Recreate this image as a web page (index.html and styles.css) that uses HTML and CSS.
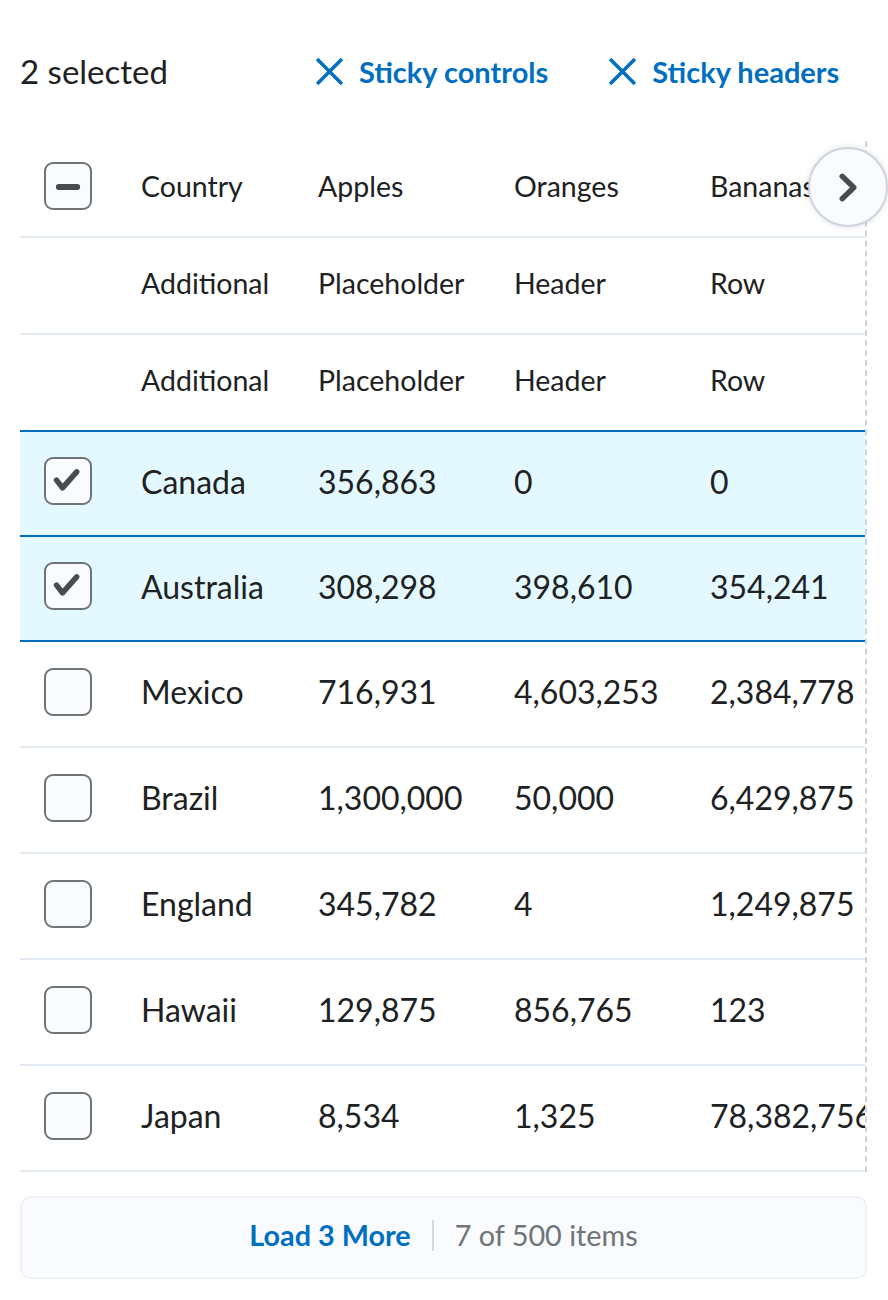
FILE: index.html
```html
<!DOCTYPE html>
<html lang="en">
<head>
<meta charset="utf-8">
<title>Table</title>
<link rel="stylesheet" href="styles.css">
</head>
<body>
<div class="page">
  <div class="toolbar">
    <span class="count">2 selected</span>
    <button class="action first">
      <svg class="x-icon" viewBox="0 0 28 28"><path d="M2 2 L26 26 M26 2 L2 26"/></svg>
      <span>Sticky controls</span>
    </button>
    <button class="action">
      <svg class="x-icon" viewBox="0 0 28 28"><path d="M2 2 L26 26 M26 2 L2 26"/></svg>
      <span>Sticky headers</span>
    </button>
  </div>

  <div class="table-area">
    <div class="table-wrap">
      <table class="data">
        <colgroup>
          <col class="c-check"><col class="c-country"><col class="c-num"><col class="c-num"><col class="c-wide">
        </colgroup>
        <thead>
          <tr class="head-main">
            <th class="check"><span class="box"><svg viewBox="0 0 48 48"><path class="minus" d="M14 25 L34 25"/></svg></span></th>
            <th>Country</th><th>Apples</th><th>Oranges</th><th>Bananas</th>
          </tr>
          <tr>
            <th></th><th>Additional</th><th>Placeholder</th><th>Header</th><th>Row</th>
          </tr>
          <tr>
            <th></th><th>Additional</th><th>Placeholder</th><th>Header</th><th>Row</th>
          </tr>
        </thead>
        <tbody>
          <tr class="selected">
            <td class="check"><span class="box"><svg viewBox="0 0 48 48"><path class="tick" d="M11.5 23 L18 31.5 L33.5 14"/></svg></span></td>
            <td>Canada</td><td>356,863</td><td>0</td><td>0</td>
          </tr>
          <tr class="selected">
            <td class="check"><span class="box"><svg viewBox="0 0 48 48"><path class="tick" d="M11.5 23 L18 31.5 L33.5 14"/></svg></span></td>
            <td>Australia</td><td>308,298</td><td>398,610</td><td>354,241</td>
          </tr>
          <tr>
            <td class="check"><span class="box"></span></td>
            <td>Mexico</td><td>716,931</td><td>4,603,253</td><td>2,384,778</td>
          </tr>
          <tr>
            <td class="check"><span class="box"></span></td>
            <td>Brazil</td><td>1,300,000</td><td>50,000</td><td>6,429,875</td>
          </tr>
          <tr>
            <td class="check"><span class="box"></span></td>
            <td>England</td><td>345,782</td><td>4</td><td>1,249,875</td>
          </tr>
          <tr>
            <td class="check"><span class="box"></span></td>
            <td>Hawaii</td><td>129,875</td><td>856,765</td><td>123</td>
          </tr>
          <tr>
            <td class="check"><span class="box"></span></td>
            <td>Japan</td><td>8,534</td><td>1,325</td><td>78,382,756</td>
          </tr>
        </tbody>
      </table>
    </div>
    <button class="scroll-btn" aria-label="Scroll right">
      <svg viewBox="0 0 78 78"><path d="M33 28 L45 39.5 L33 51"/></svg>
    </button>
  </div>

  <div class="load-more">
    <span class="load-link">Load 3 More</span>
    <span class="sep"></span>
    <span class="load-info">7 of 500 items</span>
  </div>
</div>
</body>
</html>
```

FILE: styles.css
```css
html, body {
  margin: 0;
  padding: 0;
  background: #ffffff;
}

body {
  font-family: Lato, "Open Sans", sans-serif;
  color: #202122;
}

.page {
  padding: 0 21px 0 20px;
}

.toolbar {
  display: flex;
  align-items: center;
  height: 40px;
  padding-top: 51px;
  padding-bottom: 50px;
}

.count {
  font-size: 33px;
  color: #202122;
}

.action {
  display: flex;
  align-items: center;
  gap: 15px;
  margin-left: 60px;
  padding: 0;
  border: 0;
  background: none;
  font-family: inherit;
  font-size: 29px;
  font-weight: 700;
  color: #006fbf;
}

.action.first {
  margin-left: 147px;
}

.x-icon {
  width: 29px;
  height: 29px;
}

.x-icon path {
  fill: none;
  stroke: #006fbf;
  stroke-width: 3.4;
  stroke-linecap: butt;
}

.table-area {
  position: relative;
}

.table-wrap {
  overflow: hidden;
  border-right: 2px dashed #cdd5dc;
}

.data {
  border-collapse: separate;
  border-spacing: 0;
  table-layout: fixed;
  width: 889px;
}

.c-check { width: 100px; }
.c-country { width: 177px; }
.c-num { width: 196px; }
.c-wide { width: 220px; }

.data th,
.data td {
  padding: 0 0 5px 21px;
  text-align: left;
  vertical-align: middle;
  white-space: nowrap;
  overflow: hidden;
  border-top: 2px solid #e3e9f1;
}

.data th {
  font-weight: 400;
  font-size: 28.5px;
  height: 90px;
}

.data td {
  font-size: 32px;
  height: 99px;
}

.data tr.head-main th {
  border-top: 0;
  height: 90px;
}

.data tbody tr.selected td {
  height: 98px;
}

.data tbody tr:last-child td {
  border-bottom: 2px solid #e3e9f1;
}

.data th.check,
.data td.check {
  padding-left: 24px;
}

.data tr.selected td {
  background: #e3f9ff;
  border-top-color: #006fbf;
}

.data tr.selected + tr td {
  border-top-color: #006fbf;
}

.box {
  display: block;
  width: 44px;
  height: 44px;
  border: 2px solid #6e7477;
  border-radius: 9px;
  background: #f9fbff;
  box-sizing: content-box;
}

.box svg {
  display: block;
  width: 44px;
  height: 44px;
}

.box .minus,
.box .tick {
  fill: none;
  stroke: #494c4e;
  stroke-width: 6;
  stroke-linecap: round;
  stroke-linejoin: round;
}

.box .minus {
  stroke-width: 6.5;
}

.scroll-btn {
  position: absolute;
  top: 6px;
  left: 788px;
  width: 80px;
  height: 80px;
  padding: 0;
  border: 2px solid #cdd5dc;
  border-radius: 50%;
  background: #f9fbff;
  box-shadow: 0 0 6px rgba(0, 0, 0, 0.12);
}

.scroll-btn svg {
  display: block;
  width: 76px;
  height: 76px;
}

.scroll-btn path {
  fill: none;
  stroke: #494c4e;
  stroke-width: 5.5;
  stroke-linecap: round;
  stroke-linejoin: round;
}

.load-more {
  margin-top: 24px;
  height: 74px;
  padding-bottom: 5px;
  display: flex;
  align-items: center;
  justify-content: center;
  gap: 21px;
  background: #f9fbff;
  border: 2px solid #eef1f6;
  border-radius: 10px;
  font-size: 28.8px;
}

.load-link {
  font-weight: 700;
  color: #006fbf;
}

.sep {
  width: 2px;
  height: 31px;
  background: #d3d9e3;
}

.load-info {
  color: #6e7477;
}
```
